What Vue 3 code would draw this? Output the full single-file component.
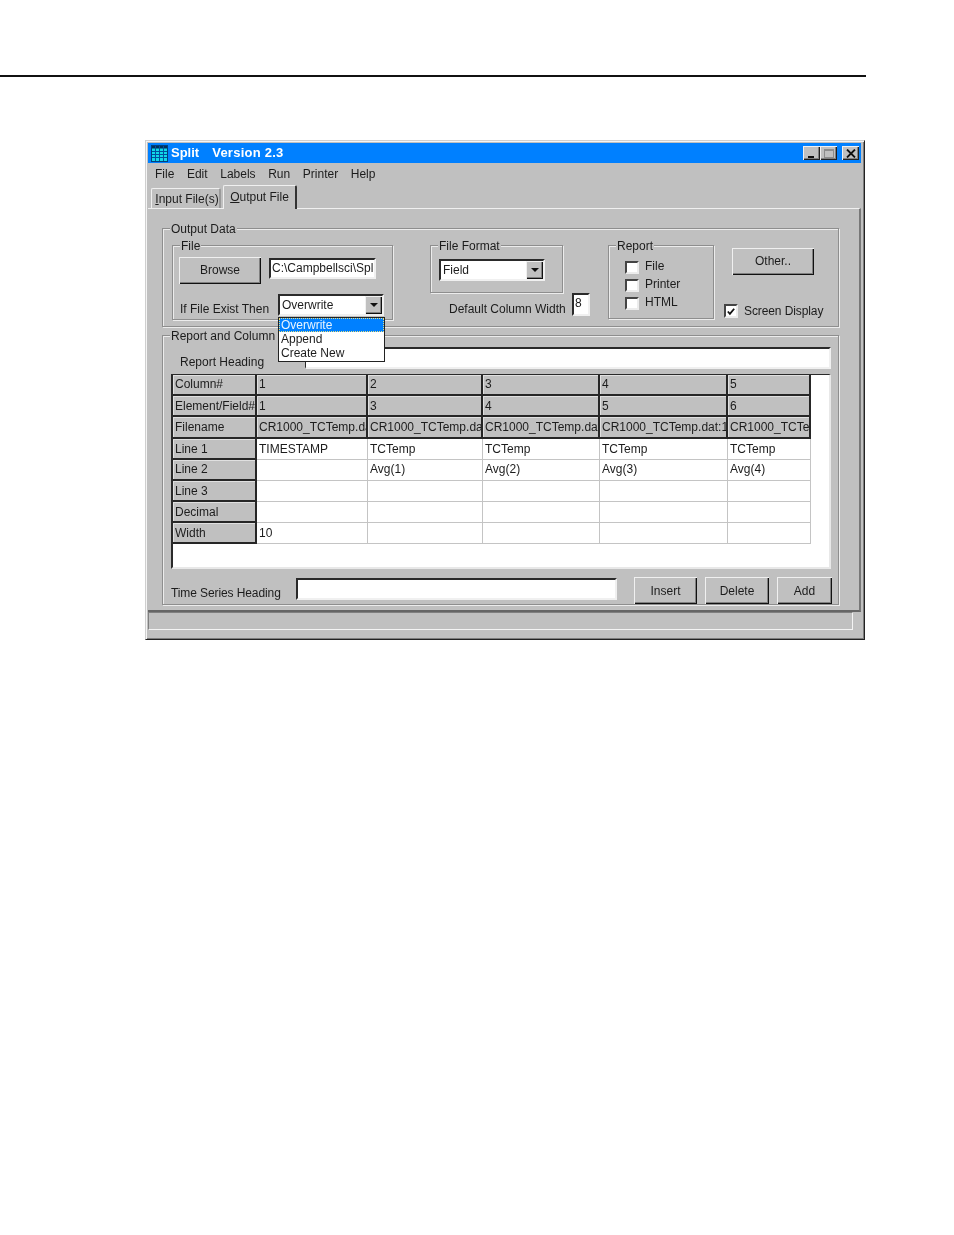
<script setup>
const menus = ['File', 'Edit', 'Labels', 'Run', 'Printer', 'Help']
const reports = ['File', 'Printer', 'HTML']
const f = 'CR1000_TCTemp.dat:1'
const rows = [
  { h: true, tight: true, cells: ['Column#', '1', '2', '3', '4', '5'] },
  { h: true, cells: ['Element/Field#', '1', '3', '4', '5', '6'] },
  { h: true, tall: true, cells: ['Filename', f, f, f, f, f] },
  { cells: ['Line 1', 'TIMESTAMP', 'TCTemp', 'TCTemp', 'TCTemp', 'TCTemp'] },
  { tight: true, cells: ['Line 2', '', 'Avg(1)', 'Avg(2)', 'Avg(3)', 'Avg(4)'] },
  { cells: ['Line 3', '', '', '', '', ''] },
  { cells: ['Decimal', '', '', '', '', ''] },
  { cells: ['Width', '10', '', '', '', ''] }
]
</script>

<template>
  <div class="page">
    <div class="rule"></div>
    <div class="window">
      <div class="titlebar">
        <svg class="appicon" width="17" height="17" viewBox="0 0 17 17">
          <rect x="0.5" y="0.5" width="16" height="16" fill="#10d8e8" stroke="#00407c" />
          <rect x="1" y="1" width="15" height="2.5" fill="#00305c" />
          <path d="M4.5 1v15M8.5 1v15M12.5 1v15M1 6.5h15M1 9.5h15M1 12.5h15" stroke="#0050a0" stroke-width="1" fill="none" />
        </svg>
        <span class="title-name">Split</span>
        <span class="title-version">Version 2.3</span>
        <div class="caption-buttons">
          <span class="cap">
            <svg width="10" height="9" viewBox="0 0 10 9"><rect x="1" y="7" width="6" height="2" fill="#111" /></svg>
          </span>
          <span class="cap">
            <svg width="10" height="9" viewBox="0 0 10 9"><rect x="0.5" y="0.5" width="9" height="8" fill="none" stroke="#8c8c8c" /><rect x="0.5" y="0.5" width="9" height="1.5" fill="#8c8c8c" /></svg>
          </span>
          <span class="cap cap-close">
            <svg width="10" height="9" viewBox="0 0 10 9"><path d="M1 0.5l8 8M9 0.5l-8 8" stroke="#111" stroke-width="1.8" fill="none" /></svg>
          </span>
        </div>
      </div>

      <div class="menubar">
        <span v-for="m in menus" :key="m">{{ m }}</span>
      </div>

      <div class="tabs">
        <div class="tab tab-back"><u>I</u>nput File(s)</div>
        <div class="tab tab-front"><u>O</u>utput File</div>
      </div>

      <div class="tabpage">
        <section class="group group-output">
          <span class="legend">Output Data</span>

          <section class="group group-file">
            <span class="legend">File</span>
            <div class="file-top">
              <div class="btn btn-browse">Browse</div>
              <div class="edit edit-path">C:\Campbellsci\Spl</div>
            </div>
            <div class="file-bottom">
              <span class="file-label">If File Exist Then</span>
              <div class="combo">
                <span class="combo-text">Overwrite</span>
                <span class="combo-arrow"><i></i></span>
                <ul class="dropdown">
                  <li class="selected">Overwrite</li>
                  <li>Append</li>
                  <li>Create New</li>
                </ul>
              </div>
            </div>
          </section>

          <div class="format-col">
            <section class="group group-format">
              <span class="legend">File Format</span>
              <div class="combo">
                <span class="combo-text">Field</span>
                <span class="combo-arrow"><i></i></span>
              </div>
            </section>
            <div class="width-row">
              <span class="width-label">Default Column Width</span>
              <div class="edit edit-width">8</div>
            </div>
          </div>

          <section class="group group-report">
            <span class="legend">Report</span>
            <label v-for="r in reports" :key="r" class="check-row">
              <span class="check"></span>
              <span class="check-text">{{ r }}</span>
            </label>
          </section>

          <div class="other-col">
            <div class="btn btn-other">Other..</div>
            <label class="check-row screen-row">
              <span class="check">
                <svg width="11" height="11" viewBox="0 0 11 11"><path d="M2 5.5l2.3 2.5L9 2.5" fill="none" stroke="#111" stroke-width="2" /></svg>
              </span>
              <span class="check-text">Screen Display</span>
            </label>
          </div>
        </section>

        <section class="group group-columns">
          <span class="legend">Report and Column Headings</span>
          <div class="heading-row">
            <span class="heading-label">Report Heading</span>
            <div class="edit edit-heading"></div>
          </div>
          <div class="gridbox">
            <div class="grid">
              <template v-for="(row, ri) in rows" :key="ri">
                <div
                  v-for="(c, ci) in row.cells"
                  :key="ci"
                  class="cell"
                  :class="{ fixed: row.h || ci === 0, tall: row.tall, tight: row.tight }"
                >{{ c }}</div>
              </template>
            </div>
          </div>
          <div class="series-row">
            <span class="series-label">Time Series Heading</span>
            <div class="edit edit-series"></div>
            <div class="btn btn-insert">Insert</div>
            <div class="btn btn-delete">Delete</div>
            <div class="btn btn-add">Add</div>
          </div>
        </section>
      </div>

      <div class="statusbar">
        <div class="status-panel"></div>
      </div>
    </div>
  </div>
</template>

<style scoped>
.page {
  width: 954px;
  height: 1235px;
  background: #fff;
  overflow: hidden;
  padding-top: 75px;
  box-sizing: border-box;
}
.rule {
  width: 866px;
  height: 2px;
  background: #111;
}
.window {
  box-sizing: border-box;
  width: 720px;
  height: 500px;
  margin: 63px 0 0 145px;
  padding: 2px 3px 3px 2px;
  background: #c0c0c0;
  border: 1px solid;
  border-color: #cfcfcf #222 #222 #cfcfcf;
  box-shadow: inset 1px 1px 0 #f4f4f4, inset -1px -1px 0 #7c7c7c;
  font: 12px/14px "Liberation Sans", Arial, sans-serif;
  color: #1c1c1c;
  filter: blur(0.35px);
}
.titlebar {
  height: 20px;
  background: #0080ff;
  display: flex;
  align-items: center;
  padding: 0 2px 0 3px;
  color: #fff;
  font-weight: bold;
  font-size: 13px;
}
.appicon {
  flex: none;
  margin-right: 3px;
}
.title-version {
  margin-left: 13px;
  letter-spacing: 0.25px;
}
.caption-buttons {
  margin-left: auto;
  display: flex;
}
.cap {
  box-sizing: border-box;
  width: 17px;
  height: 14px;
  background: #c0c0c0;
  display: flex;
  align-items: center;
  justify-content: center;
  box-shadow: inset 1px 1px 0 #f0f0f0, inset -1px -1px 0 #222, inset -2px -2px 0 #808080;
}
.cap-close {
  margin-left: 5px;
}
.menubar {
  height: 22px;
  display: flex;
  align-items: center;
  gap: 12.6px;
  padding-left: 7px;
}
.tabs {
  height: 24px;
  display: flex;
  align-items: flex-end;
  padding-left: 3px;
  position: relative;
  z-index: 1;
}
.tab {
  box-sizing: border-box;
  display: flex;
  justify-content: center;
  align-items: center;
  background: #c0c0c0;
  border-top: 1px solid #f0f0f0;
  border-left: 1px solid #f0f0f0;
  border-right: 2px solid #333;
  border-radius: 2px 2px 0 0;
}
.tab u {
  text-decoration: underline;
}
.tab-back {
  width: 70px;
  height: 20px;
  margin-bottom: 1px;
  padding-left: 3px;
  border-right-color: #9a9a9a;
}
.tab-front {
  width: 74px;
  height: 24px;
  margin-left: 2px;
  padding-bottom: 2px;
}
.tabpage {
  box-sizing: border-box;
  height: 404px;
  margin-top: -1px;
  padding: 20px 0 0 14px;
  border-top: 1px solid #f0f0f0;
  border-bottom: 2px solid #666;
  border-right: 2px solid #777;
}
.group {
  box-sizing: border-box;
  position: relative;
  border: 1px solid #8e8e8e;
  box-shadow: inset 1px 1px 0 #ececec, 1px 1px 0 #ececec;
}
.legend {
  position: absolute;
  left: 7px;
  top: -7px;
  padding: 0 1px;
  background: #c0c0c0;
  white-space: nowrap;
}
.group-output {
  width: 677px;
  height: 99px;
  display: flex;
  align-items: flex-start;
  padding: 16px 0 0 9px;
  margin-top: -1px;
  z-index: 2;
}
.group-file {
  flex: none;
  width: 221px;
  height: 75px;
  padding: 11px 0 0 6px;
  z-index: 3;
}
.file-top {
  display: flex;
  align-items: flex-start;
  gap: 8px;
}
.btn {
  box-sizing: border-box;
  flex: none;
  display: flex;
  align-items: center;
  justify-content: center;
  background: #c0c0c0;
  box-shadow: inset 1px 1px 0 #f0f0f0, inset -1px -1px 0 #111, inset -2px -2px 0 #808080;
}
.btn-browse {
  width: 82px;
  height: 27px;
  padding-bottom: 2px;
}
.edit {
  box-sizing: border-box;
  flex: none;
  background: #fff;
  border: 2px solid;
  border-color: #2a2a2a #f0f0f0 #f0f0f0 #2a2a2a;
  padding: 1px 0 0 1px;
  overflow: hidden;
  white-space: nowrap;
  line-height: 15px;
}
.edit-path {
  width: 107px;
  height: 21px;
  margin-top: 1px;
}
.file-bottom {
  display: flex;
  align-items: center;
  margin-top: 9px;
}
.file-label {
  width: 98px;
  margin-left: 1px;
  padding-top: 9px;
}
.combo {
  box-sizing: border-box;
  position: relative;
  flex: none;
  width: 106px;
  height: 22px;
  background: #fff;
  border: 2px solid;
  border-color: #2a2a2a #f0f0f0 #f0f0f0 #2a2a2a;
  display: flex;
  align-items: center;
  padding-left: 2px;
}
.combo-arrow {
  box-sizing: border-box;
  position: absolute;
  right: 0;
  top: 0;
  width: 17px;
  height: 18px;
  background: #c0c0c0;
  display: flex;
  align-items: center;
  justify-content: center;
  box-shadow: inset 1px 1px 0 #f0f0f0, inset -1px -1px 0 #111, inset -2px -2px 0 #808080;
}
.combo-arrow i {
  width: 0;
  height: 0;
  border-left: 4px solid transparent;
  border-right: 4px solid transparent;
  border-top: 4px solid #111;
}
.dropdown {
  box-sizing: border-box;
  position: absolute;
  left: -2px;
  top: 21px;
  width: 107px;
  height: 45px;
  margin: 0;
  padding: 0;
  list-style: none;
  background: #fff;
  border: 1px solid #222;
  z-index: 5;
}
.dropdown li {
  height: 14.3px;
  line-height: 14px;
  padding-left: 2px;
}
.dropdown .selected {
  box-sizing: border-box;
  background: #0080ff;
  color: #e8f4ff;
  outline: 1px dotted #e8e080;
  outline-offset: -1px;
}
.format-col {
  flex: none;
  width: 161px;
  margin-left: 37px;
}
.group-format {
  width: 133px;
  height: 48px;
  padding: 13px 0 0 8px;
}
.width-row {
  display: flex;
  align-items: flex-start;
  gap: 7px;
  padding-left: 19px;
}
.width-label {
  padding-top: 9px;
  width: 116px;
  white-space: nowrap;
}
.edit-width {
  width: 18px;
  height: 23px;
}
.group-report {
  flex: none;
  width: 106px;
  height: 74px;
  margin-left: 17px;
  padding: 14px 0 0 16px;
}
.check-row {
  display: flex;
  align-items: center;
  gap: 6px;
  height: 18px;
  margin-top: -2px;
}
.check-row + .check-row {
  margin-top: 0;
}
.check-text {
  margin-top: -2px;
}
.check {
  box-sizing: border-box;
  flex: none;
  width: 14px;
  height: 13px;
  background: #fff;
  border: 2px solid;
  border-color: #444 #ececec #ececec #444;
  display: flex;
  align-items: center;
  justify-content: center;
}
.other-col {
  flex: none;
  margin-left: 10px;
}
.btn-other {
  width: 82px;
  height: 27px;
  margin: 3px 0 0 8px;
  padding-bottom: 2px;
}
.screen-row {
  margin-top: 27px;
  white-space: nowrap;
}
.screen-row .check {
  height: 14px;
}
.screen-row .check-text {
  margin-top: 0;
  letter-spacing: -0.1px;
}
.group-columns {
  width: 677px;
  height: 270px;
  margin-top: 8px;
  padding: 11px 0 0 8px;
}
.heading-row {
  display: flex;
  align-items: flex-start;
}
.heading-label {
  width: 125px;
  margin-left: 9px;
  padding-top: 8px;
}
.edit-heading {
  width: 526px;
  height: 22px;
  border-left-width: 1px;
}
.gridbox {
  box-sizing: border-box;
  width: 660px;
  height: 195px;
  margin-top: 5px;
  background: #fff;
  border: 2px solid;
  border-color: #2a2a2a #e8e8e8 #e8e8e8 #2a2a2a;
  border-top-width: 1px;
}
.grid {
  display: grid;
  grid-template-columns: 84px 111px 115px 117px 128px 83px;
  grid-auto-rows: min-content;
  width: 638px;
}
.cell {
  box-sizing: border-box;
  height: 21px;
  padding: 2px 0 0 2px;
  line-height: 17px;
  overflow: hidden;
  white-space: nowrap;
  background: #fff;
  border-right: 1px solid #c4c4c4;
  border-bottom: 1px solid #c4c4c4;
}
.cell.tight {
  padding-top: 1px;
}
.cell.tall {
  height: 22px;
}
.cell.fixed {
  background: #c0c0c0;
  border-right: 2px solid #262626;
  border-bottom: 2px solid #262626;
  box-shadow: inset 1px 1px 0 #e0e0e0;
}
.series-row {
  display: flex;
  align-items: flex-start;
  margin-top: 8px;
}
.series-label {
  width: 125px;
  padding-top: 9px;
  white-space: nowrap;
  letter-spacing: -0.1px;
}
.edit-series {
  width: 321px;
  height: 22px;
  margin-top: 1px;
}
.btn-insert {
  width: 63px;
  height: 27px;
  margin-left: 17px;
}
.btn-delete {
  width: 64px;
  height: 27px;
  margin-left: 8px;
}
.btn-add {
  width: 55px;
  height: 27px;
  margin-left: 8px;
}
.statusbar {
  height: 18px;
  padding-right: 8px;
}
.status-panel {
  box-sizing: border-box;
  height: 18px;
  border: 1px solid;
  border-color: #808080 #f4f4f4 #f4f4f4 #808080;
}
</style>
